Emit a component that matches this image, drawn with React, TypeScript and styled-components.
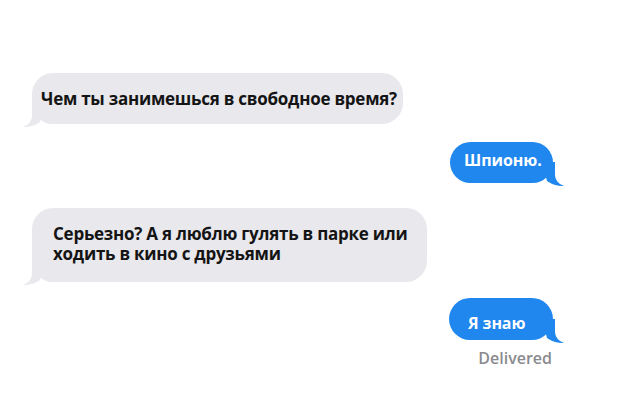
import React from 'react';
import styled, { createGlobalStyle } from 'styled-components';

const Global = createGlobalStyle`
  html, body { margin: 0; padding: 0; background: #ffffff; }
  body { font-family: "Open Sans", "Noto Sans", sans-serif; }
`;

const Page = styled.div`
  width: 620px;
  height: 405px;
  box-sizing: border-box;
  padding: 73px 67px 0 32px;
  display: flex;
  flex-direction: column;
  background: #ffffff;
  overflow: hidden;
`;

type Side = 'in' | 'out';

const Row = styled.div<{ $side: Side; $mt?: number }>`
  display: flex;
  flex-direction: column;
  align-items: ${(p) => (p.$side === 'in' ? 'flex-start' : 'flex-end')};
  margin-top: ${(p) => p.$mt ?? 0}px;
`;

const Bubble = styled.div<{ $side: Side; $w: number; $h: number; $pl: number; $pt?: number; $pb?: number }>`
  position: relative;
  box-sizing: border-box;
  width: ${(p) => p.$w}px;
  min-height: ${(p) => p.$h}px;
  padding: ${(p) => p.$pt ?? 0}px 2px ${(p) => p.$pb ?? 0}px ${(p) => p.$pl}px;
  display: flex;
  align-items: center;
  border-radius: 21px;
  background: ${(p) => (p.$side === 'in' ? '#e8e8ed' : '#1f87ee')};
  color: ${(p) => (p.$side === 'in' ? '#141414' : '#ffffff')};
  font-weight: 700;
  font-size: ${(p) => (p.$side === 'in' ? 17 : 16)}px;
  line-height: 20px;
  letter-spacing: ${(p) => (p.$side === 'in' ? -0.25 : -0.1)}px;
  white-space: ${(p) => (p.$side === 'in' ? 'pre-line' : 'nowrap')};
`;

const TailSvg = styled.svg<{ $side: Side; $color: string }>`
  position: absolute;
  bottom: -3px;
  width: 22px;
  height: 24px;
  ${(p) => (p.$side === 'in' ? 'left: -9px;' : 'right: -11px; transform: scaleX(-1);')}
  fill: ${(p) => p.$color};
`;

const Delivered = styled.span`
  margin-top: 8px;
  margin-right: 1px;
  font-size: 16px;
  line-height: 20px;
  font-weight: 600;
  color: #8a8a8e;
`;

const Tail: React.FC<{ side: Side }> = ({ side }) => (
  <TailSvg $side={side} $color={side === 'in' ? '#e8e8ed' : '#1f87ee'} viewBox="0 0 22 24">
    <path d="M9 0 L9 12 C9 18 6 21.5 0 24 C7 24 13 22 17 19 L22 0 Z" />
  </TailSvg>
);

export default function App() {
  return (
    <>
      <Global />
      <Page>
        <Row $side="in">
          <Bubble $side="in" $w={371} $h={51} $pl={9}>
            Чем ты занимешься в свободное время?
            <Tail side="in" />
          </Bubble>
        </Row>
        <Row $side="out" $mt={18}>
          <Bubble $side="out" $w={103} $h={41} $pl={14} $pb={6}>
            Шпионю.
            <Tail side="out" />
          </Bubble>
        </Row>
        <Row $side="in" $mt={25}>
          <Bubble $side="in" $w={395} $h={74} $pl={21} $pb={3}>
            {'Серьезно? А я люблю гулять в парке или\nходить в кино с друзьями'}
            <Tail side="in" />
          </Bubble>
        </Row>
        <Row $side="out" $mt={16}>
          <Bubble $side="out" $w={104} $h={42} $pl={19} $pt={8}>
            Я знаю
            <Tail side="out" />
          </Bubble>
          <Delivered>Delivered</Delivered>
        </Row>
      </Page>
    </>
  );
}
